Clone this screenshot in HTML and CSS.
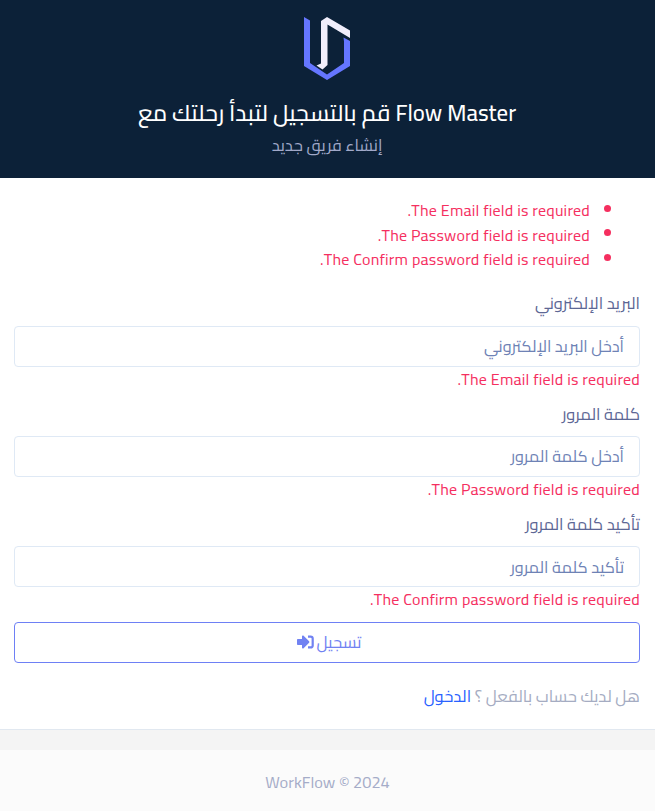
FILE: index.html
```html
<!DOCTYPE html>
<html lang="ar" dir="rtl">
<head>
<meta charset="utf-8">
<title>Flow Master</title>
<link rel="stylesheet" href="styles.css">
</head>
<body>
<header class="hero">
  <svg class="logo" width="48" height="64" viewBox="0 0 48 64">
    <path fill="#6576ff" d="M1 0 7 3.500V46L24 57.500 41 46V24.500L40.500 20.500 47 24V49L24 63 1 49Z"/>
    <path fill="#f1eefb" d="M18 4 24 0 47 13.500V21L24.500 7.500V48L19.500 52.500 13.500 48.500 18 46.500Z"/>
  </svg>
  <h1 class="title" dir="ltr"><span>قم بالتسجيل لتبدأ رحلتك مع</span> <span>Flow Master</span></h1>
  <p class="subtitle">إنشاء فريق جديد</p>
</header>
<main class="card">
  <ul class="summary">
    <li>The Email field is required.</li>
    <li>The Password field is required.</li>
    <li>The Confirm password field is required.</li>
  </ul>
  <form>
    <div class="field">
      <label class="label" for="email">البريد الإلكتروني</label>
      <input class="input" id="email" type="text" placeholder="أدخل البريد الإلكتروني">
      <div class="error">The Email field is required.</div>
    </div>
    <div class="field">
      <label class="label" for="password">كلمة المرور</label>
      <input class="input" id="password" type="password" placeholder="أدخل كلمة المرور">
      <div class="error">The Password field is required.</div>
    </div>
    <div class="field">
      <label class="label" for="confirm">تأكيد كلمة المرور</label>
      <input class="input input-last" id="confirm" type="password" placeholder="تأكيد كلمة المرور">
      <div class="error">The Confirm password field is required.</div>
    </div>
    <button class="submit" type="button"><span>تسجيل</span>
      <svg width="17" height="14" viewBox="0 0 17 14"><path fill="currentColor" d="M.8 4H5V1.500c0-.9 1-1.300 1.600-.7l5.500 5.500c.4.400.4 1 0 1.400l-5.500 5.500c-.6.600-1.600.2-1.600-.7V10H.8C.3 10 0 9.700 0 9.200V4.800C0 4.300.3 4 .8 4Z"/><path fill="none" stroke="currentColor" stroke-width="2.200" d="M11 1.600h2.600c1.400 0 2.100.7 2.100 2v6.800c0 1.300-.7 2-2.100 2H11"/></svg>
    </button>
  </form>
  <p class="login"><span>هل لديك حساب بالفعل ؟</span> <a href="#">الدخول</a></p>
</main>
<footer class="footer" dir="ltr">WorkFlow © 2024</footer>
</body>
</html>
```
FILE: styles.css
```css
* { box-sizing: border-box; }
body {
  margin: 0;
  height: 811px;
  overflow: hidden;
  display: flex;
  flex-direction: column;
  background: #f4f4f4;
  font-family: Cairo, "Noto Sans", "DejaVu Sans", sans-serif;
  font-size: 16.490px;
}
h1, p, ul { margin: 0; font-weight: 400; }
.hero {
  height: 178px;
  padding: 17px 1px 0 0;
  background: #0c2138;
  display: flex;
  flex-direction: column;
  align-items: center;
}
.logo { display: block; }
.title {
  margin-top: 14px;
  height: 36px;
  line-height: 36px;
  display: flex;
  gap: 5px;
  color: #fff;
  white-space: nowrap;
  font-size: 22.800px;
  font-weight: 500;
}
.subtitle { height: 28px; line-height: 28px; color: #a1a9c9; white-space: nowrap; }
.card {
  height: 552px;
  padding: 20px 15px 0 14px;
  background: #fff;
  border-bottom: 1px solid #e1e8f0;
  white-space: nowrap;
}
.summary, .error { color: #f52f5f; font-size: 16px; letter-spacing: 0.220px; }
.summary { list-style: none; padding: 0; }
.summary li { display: flex; align-items: center; height: 24.500px; line-height: 24.500px; padding-right: 29px; }
.summary li::before {
  content: "";
  width: 7px;
  height: 7px;
  margin-left: 14px;
  border-radius: 50%;
  background: currentColor;
  position: relative;
  top: -2px;
}
form { padding-top: 18px; }
.field { height: 110px; }
.label { display: block; height: 36.500px; line-height: 27px; color: #5d6795; }
.field + .field .label { line-height: 29px; }
.input {
  display: block;
  width: 100%;
  height: 41px;
  margin: 0;
  padding: 0 15px 1px;
  border: 1px solid #dfe9f5;
  border-radius: 4px;
  background: #fff;
  color: #6e82b5;
  font: inherit;
  font-size: 16.300px;
}
.input-last { padding-bottom: 0; }
.input::placeholder { color: #6e82b5; opacity: 1; }
.error { height: 25px; line-height: 25px; }
.submit {
  width: 100%;
  height: 41px;
  margin-top: 2px;
  padding: 0 0 0 4px;
  display: flex;
  align-items: center;
  justify-content: center;
  gap: 3px;
  border: 1px solid #6e80f5;
  border-radius: 4px;
  background: #fff;
  color: #7182f2;
  font: inherit;
}
.login { margin-top: 19px; height: 28px; line-height: 28px; color: #a5acc2; }
.login a { color: #2962ff; text-decoration: none; }
.footer {
  margin-top: 20px;
  height: 61px;
  padding-top: 3px;
  background: #fbfbfb;
  font-size: 16.400px;
  line-height: 58px;
  text-align: center;
  color: #a5acc8;
}
```
